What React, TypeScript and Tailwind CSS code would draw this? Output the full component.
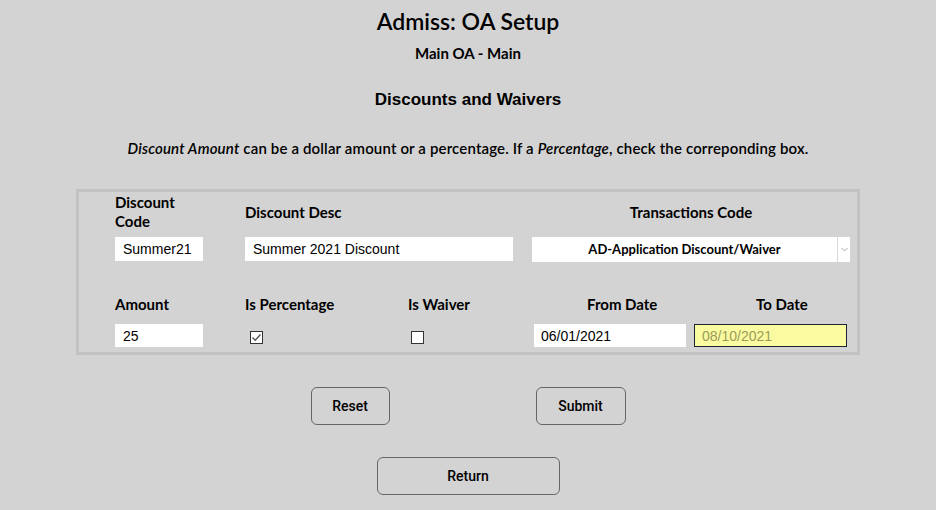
import React from "react";

function Check({ checked }: { checked?: boolean }) {
  return (
    <div className="w-[13px] h-[13px] border border-[#333] bg-white flex items-center justify-center">
      {checked && (
        <svg width="11" height="11" viewBox="0 0 11 11">
          <path d="M1.5 5.5 L4.2 8.2 L9.5 2.5" stroke="#555" strokeWidth="1.4" fill="none" />
        </svg>
      )}
    </div>
  );
}

export default function App() {
  return (
    <div className="w-[936px] h-[510px] bg-[#d3d3d3] text-black overflow-hidden flex flex-col items-center font-[Lato,sans-serif]">
      <div className="mt-[7px] text-[23px] leading-[28px] font-semibold">Admiss: OA Setup</div>
      <div className="mt-[8px] text-[15px] leading-[20px] font-bold">Main OA - Main</div>
      <div className="mt-[27px] text-[17px] leading-[20px] font-bold font-['Liberation_Sans',Arial,sans-serif]">
        Discounts and Waivers
      </div>
      <div className="mt-[28px] text-[15px] leading-[20px] font-semibold tracking-[0.15px]">
        <i>Discount Amount</i> can be a dollar amount or a percentage. If a <i>Percentage</i>, check the correponding box.
      </div>

      <div className="mt-[31px] w-[784px] border-[3px] border-[#c2c2c2] pt-[1px] pb-[5px] pl-[36px] text-[15px] leading-[19px] font-bold">
        <div className="flex">
          <div className="w-[130px]">
            <div className="h-[38px] flex items-center">
              Discount<br />Code
            </div>
            <input
              readOnly
              value="Summer21"
              className="mt-[6px] w-[88px] h-[24px] bg-white px-[8px] text-[14px] font-normal font-['Liberation_Sans',Arial,sans-serif] outline-none"
            />
          </div>
          <div className="w-[287px]">
            <div className="h-[38px] flex items-center">Discount Desc</div>
            <input
              readOnly
              value="Summer 2021 Discount"
              className="mt-[6px] w-[268px] h-[24px] bg-white px-[8px] text-[14px] font-normal font-['Liberation_Sans',Arial,sans-serif] outline-none"
            />
          </div>
          <div className="w-[318px]">
            <div className="h-[38px] flex items-center justify-center">Transactions Code</div>
            <div className="mt-[6px] w-[318px] h-[25px] bg-white flex items-center">
              <div className="flex-1 text-center text-[13px] font-bold">AD-Application Discount/Waiver</div>
              <div className="w-[13px] h-full border-l border-[#d8d8d8] flex items-center justify-center">
                <svg width="7" height="5" viewBox="0 0 7 5">
                  <path d="M0.5 1 L3.5 4 L6.5 1" stroke="#aaa" strokeWidth="1" fill="none" />
                </svg>
              </div>
            </div>
          </div>
        </div>

        <div className="flex mt-[33px]">
          <div className="w-[130px]">
            <div className="h-[19px] flex items-center">Amount</div>
            <input
              readOnly
              value="25"
              className="mt-[10px] w-[88px] h-[23px] bg-white px-[8px] text-[14px] font-normal font-['Liberation_Sans',Arial,sans-serif] outline-none"
            />
          </div>
          <div className="w-[163px]">
            <div className="h-[19px] flex items-center">Is Percentage</div>
            <div className="mt-[17px] ml-[5px]">
              <Check checked />
            </div>
          </div>
          <div className="w-[124px]">
            <div className="h-[19px] flex items-center">Is Waiver</div>
            <div className="mt-[17px] ml-[3px]">
              <Check />
            </div>
          </div>
          <div className="w-[162px]">
            <div className="h-[19px] flex items-center pl-[55px]">From Date</div>
            <input
              readOnly
              value="06/01/2021"
              className="mt-[10px] ml-[2px] w-[152px] h-[23px] bg-white px-[7px] text-[14px] font-normal font-['Liberation_Sans',Arial,sans-serif] outline-none"
            />
          </div>
          <div className="w-[156px]">
            <div className="h-[19px] flex items-center pl-[62px]">To Date</div>
            <input
              readOnly
              value="08/10/2021"
              className="mt-[10px] w-[153px] h-[23px] bg-[#fafaa0] border border-[#1c2433] px-[7px] text-[14px] font-normal font-['Liberation_Sans',Arial,sans-serif] text-[#9a9a5a] outline-none"
            />
          </div>
        </div>
      </div>

      <div className="mt-[32px] flex gap-[146px] font-[Roboto,sans-serif] text-[14px] font-medium">
        <button className="w-[79px] h-[38px] border border-[#666] rounded-[6px]">Reset</button>
        <button className="w-[90px] h-[38px] border border-[#666] rounded-[6px]">Submit</button>
      </div>
      <button className="mt-[32px] w-[183px] h-[38px] border border-[#666] rounded-[6px] font-[Roboto,sans-serif] text-[14px] font-medium">
        Return
      </button>
    </div>
  );
}
